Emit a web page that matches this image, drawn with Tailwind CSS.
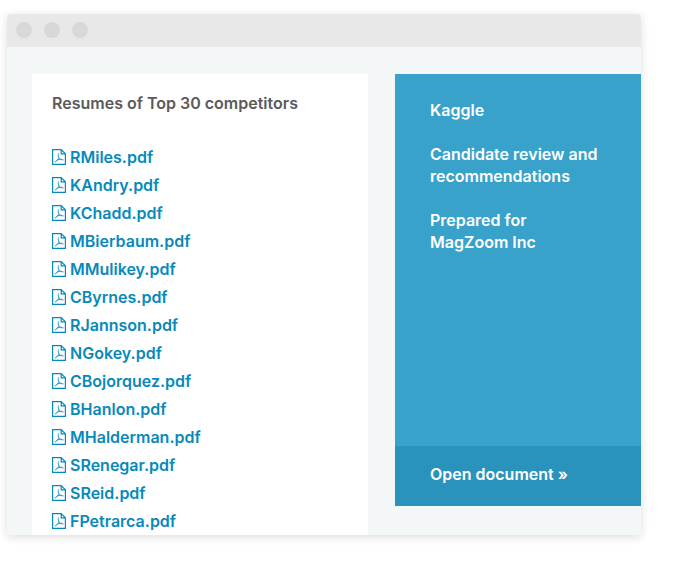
<!DOCTYPE html>
<html lang="en">
<head>
<meta charset="utf-8">
<meta name="viewport" content="width=device-width, initial-scale=1">
<title>Resumes of Top 30 competitors</title>
<script src="https://cdn.jsdelivr.net/npm/@tailwindcss/browser@4"></script>
</head>
<body class="bg-white pt-3.5 pr-[41px] pb-[42px] pl-[7px] font-['Inter','Liberation_Sans',sans-serif] text-[16px] leading-[22px] font-semibold">
<svg class="hidden" aria-hidden="true">
  <symbol id="pdf" viewBox="0 0 14 16">
    <path d="M.6.6h8.600l4.200 4.200v10.600H.6z M9.200.6v4.200h4.200" fill="none" stroke="currentColor" stroke-width="1.200"/>
    <path d="M6.400 4.800c-.5 1.500.1 3.200.6 4.200-.8 1.600-1.900 3.200-3.800 3.900M7 9c.8 1.300 2 2 4.200 1.900M4.700 11.300c1.400-.8 3.200-1.200 5-1" fill="none" stroke="currentColor" stroke-width=".8" stroke-linecap="round"/>
  </symbol>
</svg>
<main class="overflow-hidden rounded-t bg-[#f4f7f8] shadow-[0_2px_10px_rgba(0,0,0,0.14)]">
  <div class="flex gap-3 bg-[#e8e8e8] px-[9px] pt-2 pb-[9px]" aria-hidden="true">
    <span class="size-4 rounded-full bg-[#d8d8d8]"></span>
    <span class="size-4 rounded-full bg-[#d8d8d8]"></span>
    <span class="size-4 rounded-full bg-[#d8d8d8]"></span>
  </div>
  <div class="grid grid-cols-[336fr_246fr] items-start gap-[27px] pt-[27px] pl-[25px]">
    <section class="bg-white px-5 pt-[18px]">
      <h1 class="mb-[29px] text-[#5a5a5c]">Resumes of Top 30 competitors</h1>
      <ul class="leading-7 text-[#078abb]">
        <li><a href="#" class="flex items-center gap-1"><svg class="h-4 w-3.5"><use href="#pdf"/></svg>RMiles.pdf</a></li>
        <li><a href="#" class="flex items-center gap-1"><svg class="h-4 w-3.5"><use href="#pdf"/></svg>KAndry.pdf</a></li>
        <li><a href="#" class="flex items-center gap-1"><svg class="h-4 w-3.5"><use href="#pdf"/></svg>KChadd.pdf</a></li>
        <li><a href="#" class="flex items-center gap-1"><svg class="h-4 w-3.5"><use href="#pdf"/></svg>MBierbaum.pdf</a></li>
        <li><a href="#" class="flex items-center gap-1"><svg class="h-4 w-3.5"><use href="#pdf"/></svg>MMulikey.pdf</a></li>
        <li><a href="#" class="flex items-center gap-1"><svg class="h-4 w-3.5"><use href="#pdf"/></svg>CByrnes.pdf</a></li>
        <li><a href="#" class="flex items-center gap-1"><svg class="h-4 w-3.5"><use href="#pdf"/></svg>RJannson.pdf</a></li>
        <li><a href="#" class="flex items-center gap-1"><svg class="h-4 w-3.5"><use href="#pdf"/></svg>NGokey.pdf</a></li>
        <li><a href="#" class="flex items-center gap-1"><svg class="h-4 w-3.5"><use href="#pdf"/></svg>CBojorquez.pdf</a></li>
        <li><a href="#" class="flex items-center gap-1"><svg class="h-4 w-3.5"><use href="#pdf"/></svg>BHanlon.pdf</a></li>
        <li><a href="#" class="flex items-center gap-1"><svg class="h-4 w-3.5"><use href="#pdf"/></svg>MHalderman.pdf</a></li>
        <li><a href="#" class="flex items-center gap-1"><svg class="h-4 w-3.5"><use href="#pdf"/></svg>SRenegar.pdf</a></li>
        <li><a href="#" class="flex items-center gap-1"><svg class="h-4 w-3.5"><use href="#pdf"/></svg>SReid.pdf</a></li>
        <li><a href="#" class="flex items-center gap-1"><svg class="h-4 w-3.5"><use href="#pdf"/></svg>FPetrarca.pdf</a></li>
      </ul>
    </section>
    <aside class="bg-[#38a2ca] text-white">
      <div class="flex min-h-[372px] flex-col gap-[22px] pt-[25px] pr-5 pl-[35px]">
        <p>Kaggle</p>
        <p>Candidate review and recommendations</p>
        <p>Prepared for<br>MagZoom Inc</p>
      </div>
      <a href="#" class="block bg-[#2a93bb] pt-[17px] pb-[21px] pl-[35px]">Open document »</a>
    </aside>
  </div>
</main>
</body>
</html>
